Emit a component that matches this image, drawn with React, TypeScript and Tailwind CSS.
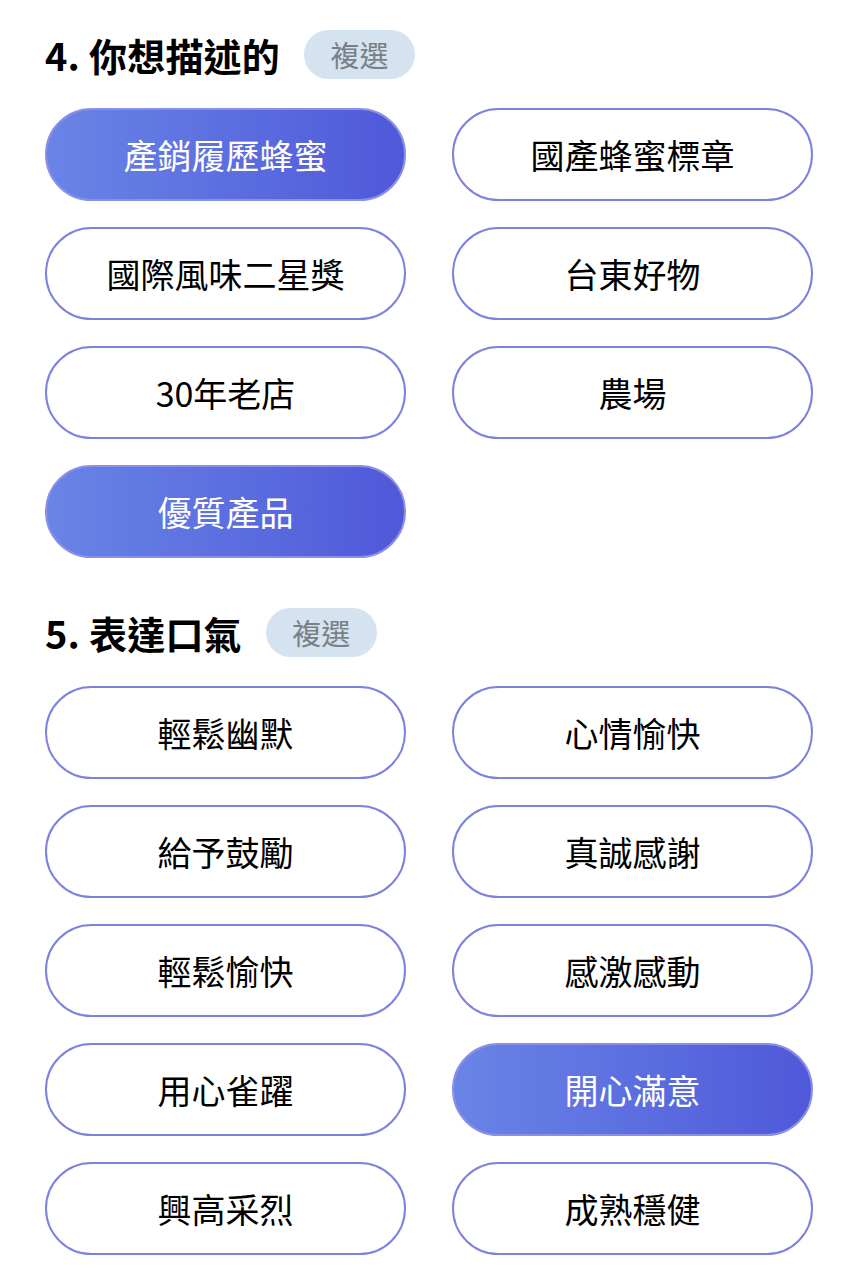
import React from "react";

type Option = { label: string; active?: boolean };

const describeOptions: Option[] = [
  { label: "產銷履歷蜂蜜", active: true },
  { label: "國產蜂蜜標章" },
  { label: "國際風味二星獎" },
  { label: "台東好物" },
  { label: "30年老店" },
  { label: "農場" },
  { label: "優質產品", active: true },
];

const toneOptions: Option[] = [
  { label: "輕鬆幽默" },
  { label: "心情愉快" },
  { label: "給予鼓勵" },
  { label: "真誠感謝" },
  { label: "輕鬆愉快" },
  { label: "感激感動" },
  { label: "用心雀躍" },
  { label: "開心滿意", active: true },
  { label: "興高采烈" },
  { label: "成熟穩健" },
];

function SectionTitle({ title }: { title: string }) {
  return (
    <div className="flex h-[49px] items-center gap-[24px]">
      <h2 className="text-[38px] font-bold leading-none tracking-[0.2px] text-black">{title}</h2>
      <span className="flex h-[49px] w-[111px] items-center justify-center rounded-full bg-[#d5e3f0] text-[29px] text-[#7a7f86]">
        複選
      </span>
    </div>
  );
}

function Chip({ label, active }: Option) {
  return (
    <button
      className={
        active
          ? "flex h-[93px] items-center justify-center rounded-full border-2 border-[#8a90e6] bg-gradient-to-r from-[#6a84e6] to-[#5058d9] text-[34px] text-white"
          : "flex h-[93px] items-center justify-center rounded-full border-2 border-[#7d82de] bg-white text-[34px] text-black"
      }
    >
      {label}
    </button>
  );
}

function Section({ title, options }: { title: string; options: Option[] }) {
  return (
    <section className="flex flex-col gap-[29px]">
      <SectionTitle title={title} />
      <div className="grid grid-cols-2 gap-x-[46px] gap-y-[26px]">
        {options.map((o) => (
          <Chip key={o.label} {...o} />
        ))}
      </div>
    </section>
  );
}

export default function App() {
  return (
    <div
      className="min-h-screen bg-white px-[45px] pt-[30px] pb-[20px]"
      style={{ fontFamily: '"Noto Sans CJK TC", "Noto Sans", sans-serif' }}
    >
      <div className="flex flex-col gap-[50px]">
        <Section title="4. 你想描述的" options={describeOptions} />
        <Section title="5. 表達口氣" options={toneOptions} />
      </div>
    </div>
  );
}
